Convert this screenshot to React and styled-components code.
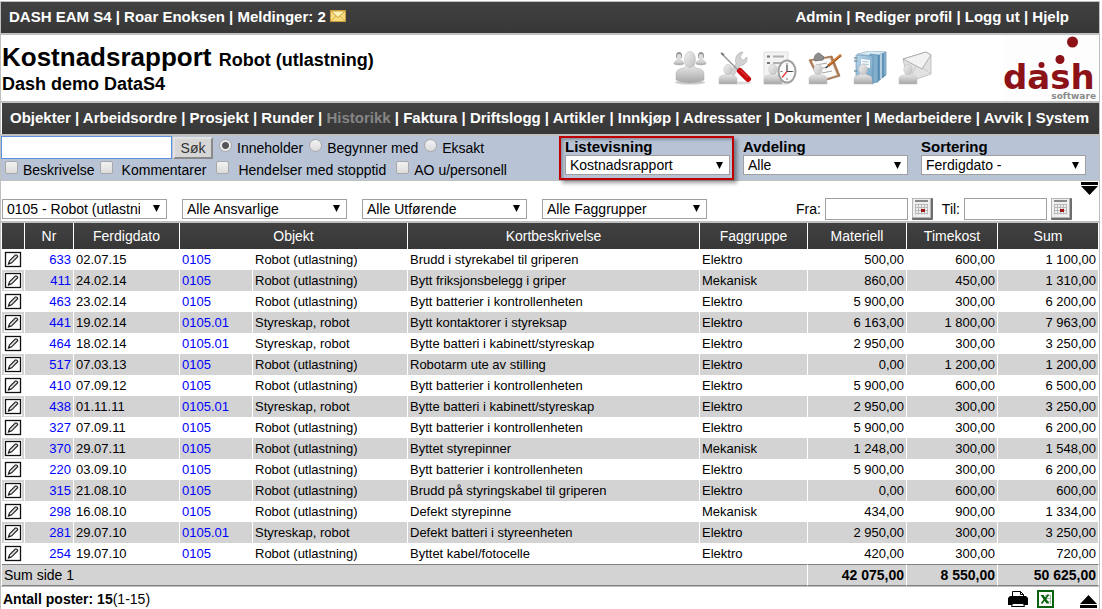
import React from 'react'
import styled, { createGlobalStyle, css } from 'styled-components'

const GlobalStyle = createGlobalStyle`
  * {
    box-sizing: border-box;
  }

  body {
    margin: 0;
    background: #fff;
    color: #000;
    font-family: 'Liberation Sans', Arial, sans-serif;
    font-size: 14px;
  }

  a {
    color: inherit;
    text-decoration: none;
  }
`

const userLinks = ['Admin', 'Rediger profil', 'Logg ut', 'Hjelp']

const menu = [
    'Objekter', 'Arbeidsordre', 'Prosjekt', 'Runder', 'Historikk', 'Faktura', 'Driftslogg', 'Artikler',
    'Innkjøp', 'Adressater', 'Dokumenter', 'Medarbeidere', 'Avvik', 'System',
]

const robot = 'Robot (utlastning)'
const skap = 'Styreskap, robot'

const rows = [
    ['633', '02.07.15', '0105', robot, 'Brudd i styrekabel til griperen', 'Elektro', '500,00', '600,00', '1 100,00'],
    ['411', '24.02.14', '0105', robot, 'Bytt friksjonsbelegg i griper', 'Mekanisk', '860,00', '450,00', '1 310,00'],
    ['463', '23.02.14', '0105', robot, 'Bytt batterier i kontrollenheten', 'Elektro', '5 900,00', '300,00', '6 200,00'],
    ['441', '19.02.14', '0105.01', skap, 'Bytt kontaktorer i styreksap', 'Elektro', '6 163,00', '1 800,00', '7 963,00'],
    ['464', '18.02.14', '0105.01', skap, 'Bytte batteri i kabinett/styreskap', 'Elektro', '2 950,00', '300,00', '3 250,00'],
    ['517', '07.03.13', '0105', robot, 'Robotarm ute av stilling', 'Elektro', '0,00', '1 200,00', '1 200,00'],
    ['410', '07.09.12', '0105', robot, 'Bytt batterier i kontrollenheten', 'Elektro', '5 900,00', '600,00', '6 500,00'],
    ['438', '01.11.11', '0105.01', skap, 'Bytte batteri i kabinett/styreskap', 'Elektro', '2 950,00', '300,00', '3 250,00'],
    ['327', '07.09.11', '0105', robot, 'Bytt batterier i kontrollenheten', 'Elektro', '5 900,00', '300,00', '6 200,00'],
    ['370', '29.07.11', '0105', robot, 'Byttet styrepinner', 'Mekanisk', '1 248,00', '300,00', '1 548,00'],
    ['220', '03.09.10', '0105', robot, 'Bytt batterier i kontrollenheten', 'Elektro', '5 900,00', '300,00', '6 200,00'],
    ['315', '21.08.10', '0105', robot, 'Brudd på styringskabel til griperen', 'Elektro', '0,00', '600,00', '600,00'],
    ['298', '16.08.10', '0105', robot, 'Defekt styrepinne', 'Mekanisk', '434,00', '900,00', '1 334,00'],
    ['281', '29.07.10', '0105.01', skap, 'Defekt batteri i styreenheten', 'Elektro', '2 950,00', '300,00', '3 250,00'],
    ['254', '19.07.10', '0105', robot, 'Byttet kabel/fotocelle', 'Elektro', '420,00', '300,00', '720,00'],
]

const listFilters = [
    { id: 'listevisning', label: 'Listevisning', value: 'Kostnadsrapport', marked: true },
    { id: 'avdeling', label: 'Avdeling', value: 'Alle' },
    { id: 'sortering', label: 'Sortering', value: 'Ferdigdato -' },
]

const rowFilters = [
    ['Objekt', '0105 - Robot (utlastning)'],
    ['Ansvarlig', 'Alle Ansvarlige'],
    ['Utførende', 'Alle Utførende'],
    ['Faggruppe', 'Alle Faggrupper'],
]

const MailIcon = () => (
    <svg width='16' height='14' viewBox='0 0 16 14' aria-hidden='true'>
        <rect x='0.5' y='1.5' width='15' height='11' fill='#f6dc7c' stroke='#c79a3a' />
        <path d='M1 12 L6 7 M15 12 L10 7' stroke='#d9ae4c' fill='none' />
        <path d='M1 2 L8 8.5 L15 2 Z' fill='#fff3b8' stroke='#c99c3c' />
    </svg>
)

// shared by all the shortcut icons
const Gradients = () => (
    <svg width='0' height='0' aria-hidden='true'>
        <defs>
            <linearGradient id='person' x1='0' y1='0' x2='0' y2='1'>
                <stop offset='0' stopColor='#ededed' />
                <stop offset='1' stopColor='#a6a6a6' />
            </linearGradient>
            <linearGradient id='head' x1='0' y1='0' x2='1' y2='1'>
                <stop offset='0' stopColor='#f2f2f2' />
                <stop offset='1' stopColor='#bdbdbd' />
            </linearGradient>
            <linearGradient id='book' x1='0' y1='0' x2='1' y2='1'>
                <stop offset='0' stopColor='#b9d6ea' />
                <stop offset='1' stopColor='#6d9fc2' />
            </linearGradient>
        </defs>
    </svg>
)

const SmallPerson = () => (
    <g stroke='#bcbcbc' strokeWidth='0.5'>
        <path d='M1 33 V28 Q1 24.5 6 24 L8 22.5 H12 L14 24 Q19 24.5 19 28 V33 Z' fill='url(#person)' />
        <ellipse cx='10' cy='18.5' rx='4.2' ry='5.2' fill='url(#head)' />
    </g>
)

const PeopleIcon = () => (
    <svg width='34' height='34' viewBox='0 0 34 34' aria-hidden='true'>
        <ellipse cx='17' cy='31.5' rx='15' ry='2' fill='#ccc' />
        <g fill='url(#person)' stroke='#a5a5a5' strokeWidth='0.5'>
            <path d='M1 13 Q1 9.5 6 9 Q11 9.5 11 13 Q6 15 1 13 Z' />
            <path d='M23 13 Q23 9.5 28 9 Q33 9.5 33 13 Q28 15 23 13 Z' />
        </g>
        <ellipse cx='6' cy='4.8' rx='3' ry='3.8' fill='#969696' />
        <ellipse cx='6' cy='6' rx='2.2' ry='3' fill='#ddd' />
        <ellipse cx='28' cy='4.8' rx='3' ry='3.8' fill='#969696' />
        <ellipse cx='28' cy='6' rx='2.2' ry='3' fill='#ddd' />
        <path d='M3 29 V23 Q3 18 11 17 Q13 16.5 13 13 H21 Q21 16.5 23 17 Q31 18 31 23 V29 Q17 35 3 29 Z' fill='url(#person)' stroke='#aaa' strokeWidth='0.5' />
        <ellipse cx='17' cy='8.5' rx='5.5' ry='8' fill='url(#head)' stroke='#b4b4b4' strokeWidth='0.5' />
    </svg>
)

const ToolsIcon = () => (
    <svg width='34' height='34' viewBox='0 0 34 34' aria-hidden='true'>
        <ellipse cx='23' cy='32' rx='11' ry='1.5' fill='#ddd' />
        <path d='M8 27 L18 13 Q16 5 22 1.5 L25 1 L22 6 L25 9.5 L29 6 Q30 13 22 15 L12 30 Z' fill='#d2d2d2' stroke='#aaa' strokeWidth='0.6' />
        <path d='M4 3 L20 19' stroke='#9a9a9a' strokeWidth='1.6' />
        <path d='M3 2 L6 4' stroke='#777' strokeWidth='2' />
        <path d='M22 20 L30 28' stroke='#c8070c' strokeWidth='6' strokeLinecap='round' />
        <path d='M22 19 L30 26.5' stroke='#e8484c' strokeWidth='1' />
        <SmallPerson />
    </svg>
)

const ClockIcon = () => (
    <svg width='34' height='34' viewBox='0 0 34 34' aria-hidden='true'>
        <path d='M1 1 H25 V33 H1 Z' fill='#f3f3f3' stroke='#dedede' />
        <path d='M4 5.5 H7 M4 12 H7' stroke='#777' strokeWidth='2' />
        <path d='M10 5.5 H21 M10 12 H18' stroke='#b0b0b0' strokeWidth='2' />
        <SmallPerson />
        <ellipse cx='24' cy='20.5' rx='8.5' ry='11' fill='#fbfbfb' stroke='#a0a0a0' strokeWidth='2' />
        <path d='M24 12 V14 M24 27 V29 M17.5 20.5 H19.5 M28.5 20.5 H30.5' stroke='#777' />
        <path d='M24 14 V20.5 H29' stroke='#444' strokeWidth='1.2' fill='none' />
        <path d='M24 20.5 L19 26.5' stroke='#e33' strokeWidth='1.2' />
    </svg>
)

const ClipboardIcon = () => (
    <svg width='34' height='34' viewBox='0 0 34 34' aria-hidden='true'>
        <path d='M1 9 L24 5 L32 25 L12 31 Z' fill='#b27e54' stroke='#8f6040' strokeWidth='0.7' />
        <path d='M4 10 L22 7 L29 24 L13 29 Z' fill='#fafafa' stroke='#ddd' strokeWidth='0.5' />
        <path d='M8 14 L19 12 M10 18 L20 16 M14 22 L24 20' stroke='#a8a8a8' />
        <path d='M6 8 L7 4.5 Q10 0 13 3.5 L16 6 L15 9 L7 10 Z' fill='#8d8d8d' stroke='#666' strokeWidth='0.7' />
        <path d='M33 4 L20 15' stroke='#a55a1d' strokeWidth='2.8' />
        <path d='M33 3.5 L21 13.5' stroke='#e89a50' strokeWidth='1' />
        <path d='M20 15 L17.5 17' stroke='#333' strokeWidth='1.2' />
        <SmallPerson />
    </svg>
)

const BooksIcon = () => (
    <svg width='34' height='34' viewBox='0 0 34 34' aria-hidden='true'>
        <path d='M22 4 L33 1 V24 L24 31 Z' fill='#5f93b8' stroke='#437598' strokeWidth='0.6' />
        <path d='M28 3 V28' stroke='#cfe2ee' strokeWidth='1.5' />
        <path d='M32 2 V24' stroke='#a9cbe0' strokeWidth='1' />
        <path d='M4 3 L17 0 L33 1 L23 5 Z' fill='#dcebf4' stroke='#7ca4bf' strokeWidth='0.6' />
        <path d='M17 3 L25 4 V31 L19 32 Z' fill='#82afcd' stroke='#4c7fa2' strokeWidth='0.6' />
        <path d='M3 4 L20 5 V33 L3 30 Z' fill='url(#book)' stroke='#5688ab' strokeWidth='0.6' />
        <path d='M8 8 L17 9 V17 L8 16 Z' fill='#f5f9fb' />
        <path d='M9.5 10.5 L15.5 11 M9.5 13 L15.5 13.5' stroke='#8fb2c9' strokeWidth='0.8' />
        <path d='M1 7 H4.5 M1 10 H4.5 M1 20 H4.5' stroke='#7c96a8' strokeWidth='1.4' />
        <SmallPerson />
    </svg>
)

const LetterIcon = () => (
    <svg width='34' height='34' viewBox='0 0 34 34' aria-hidden='true'>
        <path d='M5 8 L28 1 L33 4 L33 23 L10 31 Z' fill='#e2e2e2' stroke='#b8b8b8' strokeWidth='0.8' />
        <path d='M5 8 L28 1 L33 4 L24 18 Z' fill='#f2f2f2' stroke='#a0a0a0' strokeWidth='0.8' />
        <path d='M10 31 L18 15 M33 23 L25 17' stroke='#c2c2c2' strokeWidth='0.8' />
        <SmallPerson />
    </svg>
)

const Logo = () => (
    <svg width='96' height='66' viewBox='0 0 96 66' role='img' aria-label='dash software'>
        <rect width='96' height='66' fill='#fdfdfd' />
        <g fill='#8c1218'>
            <circle cx='69.5' cy='7' r='5.5' />
            <circle cx='57' cy='24.5' r='4.5' />
            <circle cx='38.5' cy='30' r='3' />
            <text x='0' y='54' fontFamily='DejaVu Sans' fontWeight='700' fontSize='34'>dash</text>
        </g>
        <text x='93' y='64' textAnchor='end' fill='#8a8a8a' fontFamily='DejaVu Sans' fontWeight='700' fontSize='9'>software</text>
    </svg>
)

const EditIcon = () => (
    <svg width='18' height='18' viewBox='0 0 18 18' aria-hidden='true'>
        <rect width='18' height='18' fill='#fff' />
        <rect x='1.5' y='1.5' width='15' height='14' fill='#fff' stroke='#111' strokeWidth='1.3' />
        <path d='M4.5 13 L5.5 9.8 L11.3 4 Q13.4 3.6 13.7 5.7 L7.7 11.8 Z' fill='#ddd' stroke='#222' strokeWidth='1.1' />
        <path d='M4.3 13.2 L5 11 L6.5 12.4 Z' fill='#111' />
    </svg>
)

const CalendarIcon = () => (
    <svg width='21' height='22' viewBox='0 0 21 22' aria-hidden='true'>
        <rect width='21' height='22' rx='1' fill='#6d6d6d' />
        <rect width='19' height='20' fill='#b5b5b5' />
        <rect x='1' y='1' width='17' height='18' fill='#efefef' />
        <path d='M3 3 H16' stroke='#222' />
        <path d='M3.5 6 V16.5 M6.5 6 V16.5 M9.5 6 V16.5 M12.5 6 V16.5 M15.5 6 V16.5 M3 6.5 H16 M3 9.5 H16 M3 12.5 H16 M3 15.5 H16' stroke='#b9b9b9' />
        <rect x='9' y='11' width='4' height='3' fill='#a01818' />
    </svg>
)

const PrinterIcon = () => (
    <svg width='20' height='18' viewBox='0 0 20 18' aria-hidden='true'>
        <path d='M4.5 8 V1.5 H12.5 L15.5 4.5 V8' fill='#fff' stroke='#000' />
        <path d='M12.5 1.5 V4.5 H15.5' fill='none' stroke='#000' />
        <path d='M2 6 H18 L20 8 V15 H0 V8 Z' fill='#000' />
        <path d='M4.5 13.5 H15.5 L16.5 16.5 H3.5 Z' fill='#fff' stroke='#000' />
    </svg>
)

const ExcelIcon = () => (
    <svg width='17' height='18' viewBox='0 0 17 18' aria-hidden='true'>
        <rect x='1' y='1' width='15' height='16' fill='#fff' stroke='#0a640f' strokeWidth='2' />
        <path d='M8 5.5 H14 M8 8.5 H14 M8 11.5 H14 M13.5 5 V14' stroke='#9fbfa0' />
        <path d='M3.5 5 H6.5 L12.5 13.5 H9.5 Z' fill='#0a640f' />
        <path d='M11.5 4.5 L4.5 13.5' stroke='#0a640f' strokeWidth='1.8' />
    </svg>
)

const ToBottomIcon = () => (
    <svg width='18' height='13' viewBox='0 0 18 13' aria-hidden='true'>
        <path d='M0 0 H17 V3 H0 Z M0 4 H17 L8.5 13 Z' />
    </svg>
)

const ToTopIcon = () => (
    <svg width='18' height='13' viewBox='0 0 18 13' aria-hidden='true'>
        <path d='M8.5 0 L17 9 H0 Z M0 10 H17 V13 H0 Z' />
    </svg>
)

const shortcuts = [
    ['Personer', PeopleIcon],
    ['Verktøy', ToolsIcon],
    ['Timer', ClockIcon],
    ['Oppgaver', ClipboardIcon],
    ['Dokumenter', BooksIcon],
    ['Meldinger', LetterIcon],
]

const Links = ({ items, active }) => items.map((item, i) => (
    <React.Fragment key={item}>
        {i > 0 && ' | '}
        <MenuLink href='#' $dim={item === active}>{item}</MenuLink>
    </React.Fragment>
))

const Option = ({ type, name, wide, checked, children }) => (
    <OptionLabel $wide={wide}>
        <Tick type={type} name={name} defaultChecked={checked} />
        {children}
    </OptionLabel>
)

const App = () => {
    return (
        <Page>
            <GlobalStyle />
            <TopBar>
                <span>DASH EAM S4 | Roar Enoksen | Meldinger: 2 <MailIcon /></span>
                <nav><Links items={userLinks} /></nav>
            </TopBar>
            <Header>
                <Titles>
                    <h1>Kostnadsrapport <small>Robot (utlastning)</small></h1>
                    <h2>Dash demo DataS4</h2>
                </Titles>
                <Shortcuts>
                    <Gradients />
                    {shortcuts.map(([label, Icon]) => (
                        <a key={label} href='#' aria-label={label}><Icon /></a>
                    ))}
                </Shortcuts>
                <Logo />
            </Header>
            <MenuBar><Links items={menu} active='Historikk' /></MenuBar>
            <SearchBar>
                <SearchForm onSubmit={(e) => e.preventDefault()}>
                    <SearchLine>
                        <SearchInput aria-label='Søk' />
                        <SearchButton type='submit'>Søk</SearchButton>
                        <Option type='radio' name='match' checked>Inneholder</Option>
                        <Option type='radio' name='match'>Begynner med</Option>
                        <Option type='radio' name='match'>Eksakt</Option>
                    </SearchLine>
                    <CheckLine>
                        <Option type='checkbox' name='beskrivelse'>Beskrivelse</Option>
                        <Option type='checkbox' name='kommentarer' wide>Kommentarer</Option>
                        <Option type='checkbox' name='stopptid' wide>Hendelser med stopptid</Option>
                        <Option type='checkbox' name='personell'>AO u/personell</Option>
                    </CheckLine>
                </SearchForm>
                <ListFilters>
                    {listFilters.map(({ id, label, value, marked }) => (
                        <Field key={id} $marked={marked}>
                            <label htmlFor={id}>{label}</label>
                            <Select id={id}><option>{value}</option></Select>
                        </Field>
                    ))}
                </ListFilters>
            </SearchBar>
            <RowFilters>
                {rowFilters.map(([label, value]) => (
                    <Select key={label} aria-label={label}><option>{value}</option></Select>
                ))}
                <Dates>
                    <label htmlFor='fra'>Fra:</label>
                    <DateInput id='fra' />
                    <IconButton type='button' aria-label='Velg fra-dato'><CalendarIcon /></IconButton>
                    <label htmlFor='til'>Til:</label>
                    <DateInput id='til' />
                    <IconButton type='button' aria-label='Velg til-dato'><CalendarIcon /></IconButton>
                </Dates>
                <JumpLink href='#bunn' aria-label='Til bunnen'><ToBottomIcon /></JumpLink>
            </RowFilters>
            <Table>
                <colgroup>
                    <Col $w={23} /><Col $w={49} /><Col $w={106} /><Col $w={73} /><Col $w={155} /><Col />
                    <Col $w={108} /><Col $w={99} /><Col $w={91} /><Col $w={101} />
                </colgroup>
                <thead>
                    <tr>
                        <th />
                        <th>Nr</th>
                        <th>Ferdigdato</th>
                        <th colSpan={2}>Objekt</th>
                        <th>Kortbeskrivelse</th>
                        <th>Faggruppe</th>
                        <th>Materiell</th>
                        <th>Timekost</th>
                        <th>Sum</th>
                    </tr>
                </thead>
                <tbody>
                    {rows.map(([nr, date, code, object, text, group, material, time, sum]) => (
                        <tr key={nr}>
                            <EditCell><a href='#' aria-label={`Rediger ${nr}`}><EditIcon /></a></EditCell>
                            <Cell $right><CellLink href='#'>{nr}</CellLink></Cell>
                            <Cell>{date}</Cell>
                            <Cell><CellLink href='#'>{code}</CellLink></Cell>
                            <Cell>{object}</Cell>
                            <Cell>{text}</Cell>
                            <Cell>{group}</Cell>
                            <Cell $right>{material}</Cell>
                            <Cell $right>{time}</Cell>
                            <Cell $right>{sum}</Cell>
                        </tr>
                    ))}
                </tbody>
                <tfoot>
                    <tr>
                        <td colSpan={7}>Sum side 1</td>
                        <TotalCell>42 075,00</TotalCell>
                        <TotalCell>8 550,00</TotalCell>
                        <TotalCell>50 625,00</TotalCell>
                    </tr>
                </tfoot>
            </Table>
            <Footer id='bunn'>
                <span><b>Antall poster: 15</b>(1-15)</span>
                <FooterActions>
                    <IconButton type='button' aria-label='Skriv ut'><PrinterIcon /></IconButton>
                    <IconButton type='button' aria-label='Eksporter til Excel'><ExcelIcon /></IconButton>
                    <TopLink href='#' aria-label='Til toppen'><ToTopIcon /></TopLink>
                </FooterActions>
            </Footer>
        </Page>
    )
}

const darkBar = css`
  background: linear-gradient(#414141, #373737);
  color: #fff;
`

const Page = styled.div`
  margin: 1px 2px 0 0;
  border: 1px solid #c0c0c0;
  border-bottom: none;
`

const TopBar = styled.header`
  ${darkBar}
  display: flex;
  justify-content: space-between;
  height: 31px;
  padding: 0 30px 0 8px;
  font-size: 15px;
  font-weight: bold;
  line-height: 30px;

  svg {
    vertical-align: -1px;
  }
`

const MenuLink = styled.a`
  color: ${(props) => (props.$dim ? '#858585' : '#fff')};
`

const Header = styled.section`
  display: flex;
  align-items: center;
  height: 70px;
  border: 2px solid #c0c0c0;
  border-width: 2px 0;
`

const Titles = styled.div`
  flex: 1;
  align-self: flex-start;
  padding: 7px 0 0 1px;

  h1,
  h2 {
    margin: 0;
    font-size: 18px;
    line-height: 18px;
  }

  h1 {
    font-size: 26px;
    line-height: 30px;
  }

  small {
    font-size: 18px;
  }
`

const Shortcuts = styled.nav`
  display: flex;
  gap: 11px;
  margin-right: 71px;

  & > svg {
    position: absolute;
  }

  a,
  a svg {
    display: block;
  }
`

const MenuBar = styled.nav`
  ${darkBar}
  height: 31px;
  margin-left: 1px;
  padding-left: 8px;
  font-size: 15px;
  font-weight: bold;
  line-height: 30px;
  white-space: nowrap;
`

const SearchBar = styled.section`
  display: flex;
  justify-content: space-between;
  height: 47px;
  border: solid #c0c0c0;
  border-width: 2px 0 1px;
  background: #b8c4d6;
  line-height: 20px;
`

const SearchForm = styled.form`
  display: flex;
  flex-direction: column;
`

const SearchLine = styled.div`
  display: flex;
  align-items: center;
  gap: 6px;
  height: 24px;
`

const CheckLine = styled(SearchLine)`
  gap: 5px;
  height: 22px;
  padding-left: 4px;
`

const SearchInput = styled.input`
  width: 171px;
  height: 23px;
  margin-right: -5px;
  border: 1px solid #5b8fe0;
  background: #fff;
  font: inherit;
`

const SearchButton = styled.button`
  width: 40px;
  height: 22px;
  padding: 0;
  border: 2px solid;
  border-color: #e2e2e2 #8a8a8a #8a8a8a #e2e2e2;
  background: #d6d6d6;
  color: #333;
  font: inherit;
  line-height: 18px;
`

const OptionLabel = styled.label`
  display: flex;
  align-items: center;
  gap: ${(props) => (props.$wide ? '9px' : '5px')};
  margin-right: ${(props) => (props.$wide ? '5px' : '0')};
`

const Tick = styled.input`
  appearance: none;
  width: 13px;
  height: 13px;
  margin: 0 0 4px;
  border: 1px solid #a8a8a8;
  border-radius: ${(props) => (props.type === 'radio' ? '50%' : '2px')};
  background: linear-gradient(#f2f2f2, #dcdcdc);

  &:checked {
    background: radial-gradient(#555 0 3px, #eaeaea 4px);
  }
`

const ListFilters = styled.div`
  display: flex;
  align-items: flex-start;
  gap: 13px;
  padding: 2px 13px 0 0;
`

const Field = styled.div`
  position: relative;
  width: 165px;

  label {
    display: block;
    height: 17px;
    font-size: 15px;
    font-weight: bold;
    line-height: 17px;
  }

  ${(props) => props.$marked && css`
    &::after {
      content: '';
      position: absolute;
      inset: -2px -4px -5px -6px;
      border: 2px solid #c00000;
      box-shadow: 3px 3px 4px rgba(0, 0, 0, 0.4), inset 2px 2px 3px rgba(0, 0, 0, 0.25);
      pointer-events: none;
    }
  `}
`

const Select = styled.select`
  appearance: none;
  display: block;
  width: 165px;
  height: 20px;
  padding: 0 26px 0 4px;
  overflow: hidden;
  border: 1px solid #a0a0a0;
  border-radius: 0;
  background: #fff url("data:image/svg+xml,%3Csvg xmlns='http://www.w3.org/2000/svg' width='7' height='7'%3E%3Cpath d='M0 0h7l-3.5 7z'/%3E%3C/svg%3E") no-repeat right 6px center;
  color: #000;
  font: inherit;
  line-height: 18px;
`

const RowFilters = styled.section`
  display: flex;
  align-items: center;
  gap: 15px;
  height: 42px;
  padding: 15px 0 0 1px;
  border-bottom: 2px solid #c0c0c0;
`

const Dates = styled.div`
  display: flex;
  align-items: center;
  gap: 4px;
  margin-left: auto;

  button + label {
    margin-left: 5px;
  }
`

const DateInput = styled.input`
  width: 83px;
  height: 22px;
  border: 1px solid #a0a0a0;
  font: inherit;
`

const IconButton = styled.button`
  padding: 0;
  border: none;
  background: none;

  svg {
    display: block;
  }
`

const JumpLink = styled.a`
  align-self: flex-start;
  margin: -14px 0 0 -6px;

  svg {
    display: block;
  }
`

const Table = styled.table`
  width: 100%;
  padding-left: 1px;
  border-spacing: 0;
  table-layout: fixed;
  font-size: 13px;

  th,
  td {
    padding: 0 2px;
    border-right: 1px solid #fff;
    white-space: nowrap;
  }

  th {
    ${darkBar}
    height: 26px;
    font-size: 14px;
    font-weight: normal;
  }

  tbody tr:nth-child(even) {
    background: #d3d3d3;
  }

  tfoot td {
    height: 22px;
    border-top: 1px solid #808080;
    border-bottom: 1px solid #808080;
    background: #d3d3d3;
    font-size: 14px;
  }
`

const Col = styled.col`
  width: ${(props) => (props.$w ? `${props.$w}px` : 'auto')};
`

const Cell = styled.td`
  height: 21px;
  text-align: ${(props) => (props.$right ? 'right' : 'left')};
`

const EditCell = styled.td`
  && {
    padding: 1px 2px;
  }

  svg {
    display: block;
  }
`

const TotalCell = styled.td`
  font-weight: bold;
  text-align: right;
`

const CellLink = styled.a`
  color: #00f;
`

const Footer = styled.footer`
  display: flex;
  align-items: center;
  justify-content: space-between;
  height: 24px;
  padding: 0 1px 0 2px;
  border-top: 1px solid #c0c0c0;
`

const FooterActions = styled.div`
  display: flex;
  align-items: center;
  gap: 9px;
`

const TopLink = styled.a`
  margin: 6px 0 0 17px;

  svg {
    display: block;
  }
`

export default App
